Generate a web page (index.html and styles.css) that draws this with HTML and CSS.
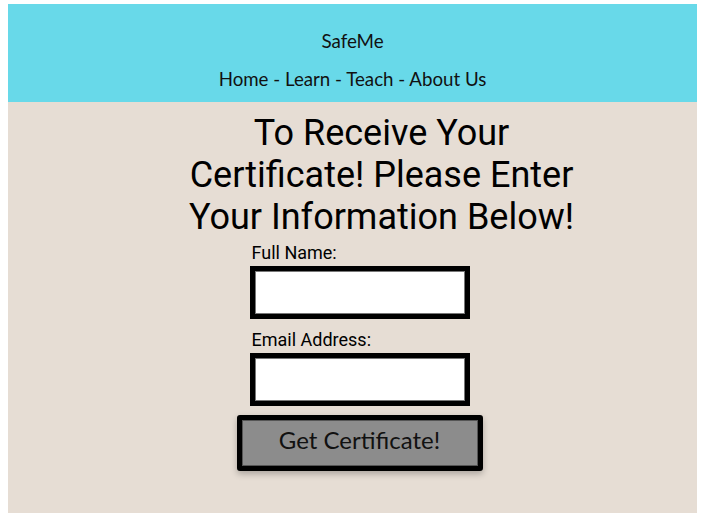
FILE: index.html
```html
<!DOCTYPE html>
<html>
<head>
<meta charset="utf-8">
<link rel="stylesheet" href="styles.css">
</head>
<body>
<header class="top">
  <div class="brand">SafeMe</div>
  <nav class="nav">Home - Learn - Teach - About Us</nav>
</header>
<main class="main">
  <h1 class="title">To Receive Your Certificate! Please Enter Your Information Below!</h1>
  <form class="form">
    <label class="label" for="name">Full Name:</label>
    <input class="field" id="name" type="text">
    <label class="label second" for="email">Email Address:</label>
    <input class="field" id="email" type="text">
    <button class="btn" type="button">Get Certificate!</button>
  </form>
</main>
</body>
</html>
```
FILE: styles.css
```css
body {
  margin: 4px 8px 6px 8px;
  background: #fff;
  display: flex;
  flex-direction: column;
}
.top {
  background: #68d9e9;
  height: 98px;
  display: flex;
  flex-direction: column;
  align-items: center;
  font-family: "Lato", "Open Sans", sans-serif;
  color: #111;
  padding-top: 27px;
  box-sizing: border-box;
}
.brand { font-size: 18.8px; line-height: 20px; }
.nav { font-size: 18.7px; line-height: 22px; margin-top: 17px; }
.main {
  height: 411px;
  background: #e6ddd4;
  display: flex;
  flex-direction: column;
  align-items: center;
  padding-top: 10px;
  box-sizing: border-box;
}
.title {
  margin: 0 0 0 58px;
  width: 400px;
  text-align: center;
  font-family: "Roboto", sans-serif;
  font-weight: 400;
  font-size: 36px;
  line-height: 42px;
  color: #000;
}
.form {
  display: flex;
  flex-direction: column;
  align-items: center;
  margin-left: 14px;
  margin-top: 5px;
}
.label {
  align-self: flex-start;
  margin-left: 15px;
  font-family: "Roboto", sans-serif;
  font-size: 18px;
  line-height: 20px;
  color: #000;
  margin-bottom: 3px;
}
.label.second { margin-top: 11px; }
.field {
  box-sizing: border-box;
  width: 220px;
  height: 53px;
  border: 5px solid #000;
  background: #fff;
  margin: 0;
  padding: 0;
  box-shadow: inset 0 0 0 1px #777;
}
.btn {
  box-sizing: border-box;
  width: 246px;
  height: 56px;
  margin-top: 9px;
  background: #8c8c8c;
  border: 5px solid #000;
  border-radius: 3px;
  box-shadow: 0 3px 6px rgba(0,0,0,0.25), inset 0 0 0 1px #555;
  font-family: "Lato", "Open Sans", sans-serif;
  font-size: 24px;
  color: #111;
  padding: 0 0 7px 0;
}
```
